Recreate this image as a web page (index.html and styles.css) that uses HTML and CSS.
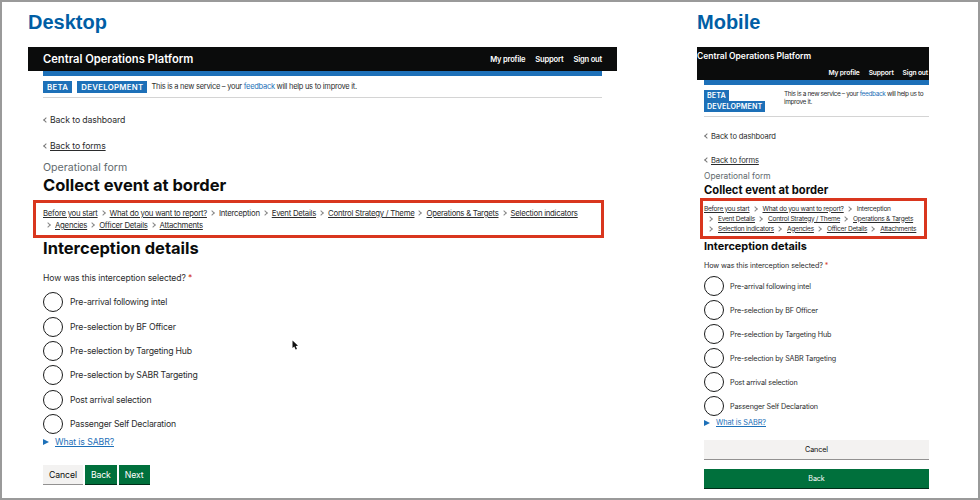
FILE: index.html
```html
<!DOCTYPE html>
<html lang="en">
<head>
<meta charset="utf-8">
<title>Central Operations Platform</title>
<link rel="stylesheet" href="styles.css">
</head>
<body>
<div class="frame">
  <section class="col col-d">
    <h2 class="label">Desktop</h2>
    <div class="hdr">
      <span class="brand">Central Operations Platform</span>
      <nav class="nav"><span>My profile</span><span>Support</span><span>Sign out</span></nav>
    </div>
    <div class="page">
      <div class="stripe"></div>
      <div class="phase">
        <div class="tags"><span class="tag">BETA</span><span class="tag">DEVELOPMENT</span></div>
        <p class="phase-text">This is a new service – your <a class="blue">feedback</a> will help us to improve it.</p>
      </div>
      <p class="back b1"><i class="lt"></i>Back to dashboard</p>
      <p class="back b2"><i class="lt"></i><u>Back to forms</u></p>
      <p class="caption">Operational form</p>
      <h1 class="title">Collect event at border</h1>
      <div class="crumbs">
        <u>Before you start</u><i class="gt"></i><u>What do you want to report?</u><i class="gt"></i><span>Interception</span><i class="gt"></i><u>Event Details</u><i class="gt"></i><u>Control Strategy / Theme</u><i class="gt"></i><u>Operations &amp; Targets</u><i class="gt"></i><u>Selection indicators</u><br><i class="gt first"></i><u>Agencies</u><i class="gt"></i><u>Officer Details</u><i class="gt"></i><u>Attachments</u>
      </div>
      <h2 class="sub">Interception details</h2>
      <p class="q">How was this interception selected? <span class="req">*</span></p>
      <div class="radios">
        <div class="radio"><i class="dot"></i>Pre-arrival following intel</div>
        <div class="radio"><i class="dot"></i>Pre-selection by BF Officer</div>
        <div class="radio"><i class="dot"></i>Pre-selection by Targeting Hub</div>
        <div class="radio"><i class="dot"></i>Pre-selection by SABR Targeting</div>
        <div class="radio"><i class="dot"></i>Post arrival selection</div>
        <div class="radio"><i class="dot"></i>Passenger Self Declaration</div>
      </div>
      <div class="details"><i class="tri"></i><u>What is SABR?</u></div>
      <div class="btns">
        <span class="btn grey">Cancel</span><span class="btn green">Back</span><span class="btn green">Next</span>
      </div>
    </div>
    <svg class="cursor" width="7" height="11" viewBox="0 0 7 11"><path d="M0.5 0.5 L0.5 8 L2.3 6.4 L3.6 9.6 L5 9 L3.7 6 L6 5.8 Z" fill="#111"/></svg>
  </section>

  <section class="col col-m">
    <h2 class="label">Mobile</h2>
    <div class="hdr">
      <span class="brand">Central Operations Platform</span>
      <nav class="nav"><span>My profile</span><span>Support</span><span>Sign out</span></nav>
    </div>
    <div class="page">
      <div class="stripe"></div>
      <div class="phase">
        <div class="tags"><span class="tag">BETA</span><span class="tag">DEVELOPMENT</span></div>
        <p class="phase-text">This is a new service – your <a class="blue">feedback</a> will help us to improve it.</p>
      </div>
      <p class="back b1"><i class="lt"></i>Back to dashboard</p>
      <p class="back b2"><i class="lt"></i><u>Back to forms</u></p>
      <p class="caption">Operational form</p>
      <h1 class="title">Collect event at border</h1>
      <div class="crumbs">
        <u>Before you start</u><i class="gt"></i><u>What do you want to report?</u><i class="gt"></i><span>Interception</span><br><i class="gt first"></i><u>Event Details</u><i class="gt"></i><u>Control Strategy / Theme</u><i class="gt"></i><u>Operations &amp; Targets</u><br><i class="gt first"></i><u>Selection indicators</u><i class="gt"></i><u>Agencies</u><i class="gt"></i><u>Officer Details</u><i class="gt"></i><u>Attachments</u>
      </div>
      <h2 class="sub">Interception details</h2>
      <p class="q">How was this interception selected? <span class="req">*</span></p>
      <div class="radios">
        <div class="radio"><i class="dot"></i>Pre-arrival following intel</div>
        <div class="radio"><i class="dot"></i>Pre-selection by BF Officer</div>
        <div class="radio"><i class="dot"></i>Pre-selection by Targeting Hub</div>
        <div class="radio"><i class="dot"></i>Pre-selection by SABR Targeting</div>
        <div class="radio"><i class="dot"></i>Post arrival selection</div>
        <div class="radio"><i class="dot"></i>Passenger Self Declaration</div>
      </div>
      <div class="details"><i class="tri"></i><u>What is SABR?</u></div>
      <div class="btns">
        <span class="btn grey">Cancel</span><span class="btn green">Back</span><span class="btn green">Next</span>
      </div>
    </div>
  </section>
</div>
</body>
</html>
```
FILE: styles.css
```css
* { box-sizing: border-box; }
html, body { margin: 0; padding: 0; height: 500px; overflow: hidden; background: #fff; }
body { font-family: Inter, "Liberation Sans", sans-serif; color: #2b2c2d; }
p, h1, h2 { margin: 0; }
i { font-style: normal; }

.frame {
  height: 500px;
  border: 2px solid #9a9a9a;
  display: flex;
  overflow: hidden;
  position: relative;
  padding-left: 26px;
}
.col { position: relative; flex: none; }
.col-d { width: 589px; margin-right: 80px; }
.col-m { width: 232px; }

.label {
  font: bold 20px/24px "Liberation Sans", sans-serif;
  color: #005ea5;
  padding-top: 8px;
  height: 45px;
}

.hdr { background: #0b0c0c; color: #fff; display: flex; justify-content: space-between; align-items: center; height: 24px; padding: 0 15px; }
.brand { font-size: 11.2px; font-weight: 600; }
.nav { display: flex; gap: 10px; font-size: 7.6px; font-weight: 600; letter-spacing: -0.2px; }

.page { padding: 0 15px; }
.stripe { height: 5px; background: #1d70b8; }
.phase { display: flex; align-items: center; gap: 4px; height: 22px; border-bottom: 1px solid #d4d4d4; font-size: 7.5px; letter-spacing: -0.27px; }
.tags { display: flex; gap: 5px; }
.tag { background: #1d70b8; color: #fff; font-weight: 600; letter-spacing: 0.3px; padding: 0 4px; line-height: 12px; font-size: 7.8px; display: inline-block; }
.phase-text { line-height: 10px; }
.blue { color: #1d70b8; }

.back { font-size: 8.7px; line-height: 12px; letter-spacing: -0.1px; }
.b1 { margin-top: 16px; }
.b2 { margin-top: 14px; }
.lt { display: inline-block; width: 4px; height: 4px; border-left: 1px solid #777; border-bottom: 1px solid #777; transform: rotate(45deg); margin: 0 2px 1px 1px; }

.caption { font-size: 10.6px; line-height: 12px; color: #626a6e; margin-top: 10px; }
.title { font-size: 16.5px; line-height: 20px; font-weight: 700; color: #0b0c0c; margin-top: 1px; }

.crumbs {
  margin: 5px -2px 0 -10px;
  padding: 4px 7px 3px;
  border: 3px solid #d9361e;
  font-size: 7.8px;
  line-height: 12px;
  letter-spacing: -0.27px;
  height: 38px;
  white-space: nowrap;
}
.gt { display: inline-block; width: 4px; height: 4px; border-right: 1px solid #888; border-top: 1px solid #888; transform: rotate(45deg); margin: 0 5px 1px 3px; }
.gt.first { margin-left: 3px; }

.sub { font-size: 16.5px; line-height: 20px; font-weight: 700; color: #0b0c0c; }
.q { font-size: 8.6px; line-height: 12px; margin-top: 14px; letter-spacing: -0.1px; }
.req { color: #d4351c; }
.radios { margin-top: 6px; }
.radio { display: flex; align-items: center; height: 24.4px; font-size: 8.7px; letter-spacing: -0.2px; gap: 7px; }
.dot { width: 20px; height: 20px; border: 1.5px solid #1b1c1c; border-radius: 50%; flex: none; }
.details { font-size: 8.7px; line-height: 12px; letter-spacing: -0.1px; color: #1d70b8; display: flex; align-items: center; }
.tri { width: 0; height: 0; border-left: 6px solid #1d70b8; border-top: 3px solid transparent; border-bottom: 3px solid transparent; margin-right: 6px; }

.btns { display: flex; gap: 2px; margin-top: 17px; }
.btn { display: flex; align-items: center; justify-content: center; height: 20px; font-size: 8.7px; letter-spacing: -0.1px; padding: 0 6px; }
.grey { background: #f3f2f1; border-bottom: 1px solid #929191; color: #0b0c0c; }
.green { background: #00703c; color: #fff; border-bottom: 1px solid #002d18; }

.cursor { position: absolute; left: 264px; top: 338px; }

/* Mobile narrow variant */
.col-m .hdr { flex-direction: column; align-items: stretch; height: 33px; padding: 0; justify-content: flex-start; }
.col-m .brand { font-size: 8.5px; line-height: 19px; }
.col-m .nav { justify-content: flex-end; gap: 9px; font-size: 6.7px; line-height: 14px; letter-spacing: -0.15px; padding-right: 1px; }
.col-m .page { padding: 0 0 0 7px; }
.col-m .phase { align-items: flex-start; height: 32px; padding-top: 5px; gap: 0; font-size: 6.5px; letter-spacing: -0.38px; }
.col-m .tags { flex-direction: column; gap: 0; align-items: flex-start; width: 80px; flex: none; }
.col-m .tag { font-size: 7.2px; line-height: 11px; letter-spacing: 0.1px; padding: 0 3px; }
.col-m .phase-text { line-height: 8px; }
.col-m .back { font-size: 7.6px; letter-spacing: -0.15px; }
.col-m .b1 { margin-top: 14px; }
.col-m .b2 { margin-top: 12px; }
.col-m .caption { font-size: 8.4px; line-height: 12px; margin-top: 3px; }
.col-m .title { font-size: 11.2px; line-height: 16px; margin-top: 0; }
.col-m .crumbs { margin: 0 2px 0 -4px; padding: 2.5px 1px; font-size: 6.6px; line-height: 10px; letter-spacing: -0.27px; height: 41px; }
.col-m .gt { margin: 0 6px 0 3px; }
.col-m .gt.first { margin-left: 4px; }
.col-m .sub { font-size: 10.9px; line-height: 14px; }
.col-m .q { font-size: 7.2px; margin-top: 7px; }
.col-m .radios { margin-top: 2px; }
.col-m .radio { height: 24px; font-size: 7.2px; letter-spacing: -0.15px; gap: 6px; }
.col-m .details { font-size: 7.4px; line-height: 10px; }
.col-m .btns { flex-direction: column; gap: 9px; margin-top: 12px; }
.col-m .btn { height: 20px; font-size: 7.2px; }
```
